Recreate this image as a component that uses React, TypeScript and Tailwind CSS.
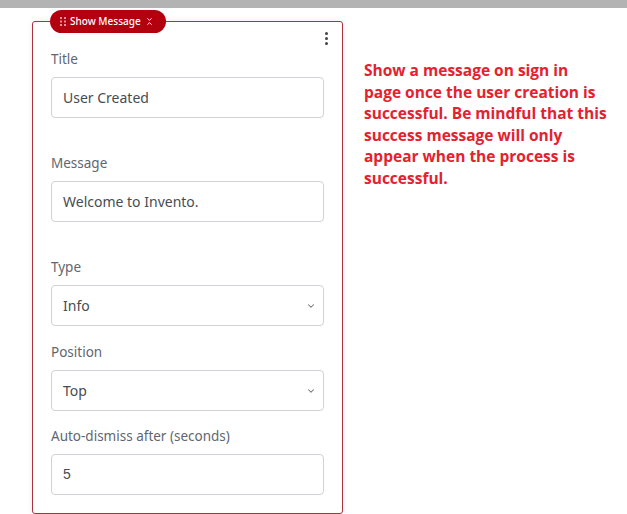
import { ChevronDown, ChevronsDownUp } from 'lucide-react'

const labelCls = 'block text-[13.5px] leading-5 text-[#5f6670]'
const boxCls =
  'flex h-[41px] w-full items-center rounded-[4px] border border-[#cfd2d6] bg-white pl-[11px] text-[14px] text-[#474c52]'

function Field({ label, value, select, mono }: { label: string; value: string; select?: boolean; mono?: boolean }) {
  return (
    <div>
      <label className={labelCls}>{label}</label>
      <div className={`${boxCls} mt-2 justify-between ${select ? 'pr-[7px]' : 'pr-[11px]'}`}>
        <span className={mono ? "font-['Liberation_Sans',Arial,sans-serif]" : ''}>{value}</span>
        {select && <ChevronDown size={10} strokeWidth={2.5} className="text-[#6b7078]" />}
      </div>
    </div>
  )
}

export default function App() {
  return (
    <div className="min-h-[514px] w-[627px] overflow-hidden bg-white font-['Noto_Sans',sans-serif]">
      {/* top bar */}
      <div className="h-2 bg-[#b3b3b3]" />

      <div className="flex items-start">
        {/* Card */}
        <div className="relative ml-8 mt-[13px] h-[493px] w-[311px] rounded-[3px] border border-[#a8323d] bg-white px-[18px] pt-[27px] shadow-[0_0_6px_rgba(0,0,0,0.08)]">
          {/* badge */}
          <div className="absolute -top-[12px] left-[17px] flex h-[23px] w-[116px] items-center gap-[4px] whitespace-nowrap rounded-full bg-[#b3000f] pl-[10px] text-[10px] font-medium text-white">
            <svg width="6" height="9" viewBox="0 0 6 9" className="shrink-0 opacity-80">
              {[0, 3.5, 7].map((y) => (
                <g key={y}>
                  <rect x="0" y={y} width="2" height="2" fill="#f2b4b8" />
                  <rect x="4" y={y} width="2" height="2" fill="#f2b4b8" />
                </g>
              ))}
            </svg>
            <span>Show Message</span>
            <ChevronsDownUp size={9} strokeWidth={2.5} className="shrink-0" />
          </div>

          {/* kebab */}
          <div className="absolute right-[14px] top-[10px] flex flex-col gap-[2px]">
            <span className="h-[3px] w-[3px] rounded-full bg-[#444]" />
            <span className="h-[3px] w-[3px] rounded-full bg-[#444]" />
            <span className="h-[3px] w-[3px] rounded-full bg-[#444]" />
          </div>

          <Field label="Title" value="User Created" />
          <div className="mt-[35px]">
            <Field label="Message" value="Welcome to Invento." />
          </div>
          <div className="mt-[35px]">
            <Field label="Type" value="Info" select />
          </div>
          <div className="mt-4">
            <Field label="Position" value="Top" select />
          </div>
          <div className="mt-[15px]">
            <Field label="Auto-dismiss after (seconds)" value="5" mono />
          </div>
        </div>

        {/* note */}
        <p className="ml-[21px] mt-[52px] whitespace-nowrap font-['Open_Sans',sans-serif] text-[15.5px] font-bold leading-[21.6px] text-[#e3222f]">
          Show a message on sign in
          <br />
          page once the user creation is
          <br />
          successful. Be mindful that this
          <br />
          success message will only
          <br />
          appear when the process is
          <br />
          successful.
        </p>
      </div>
    </div>
  )
}
